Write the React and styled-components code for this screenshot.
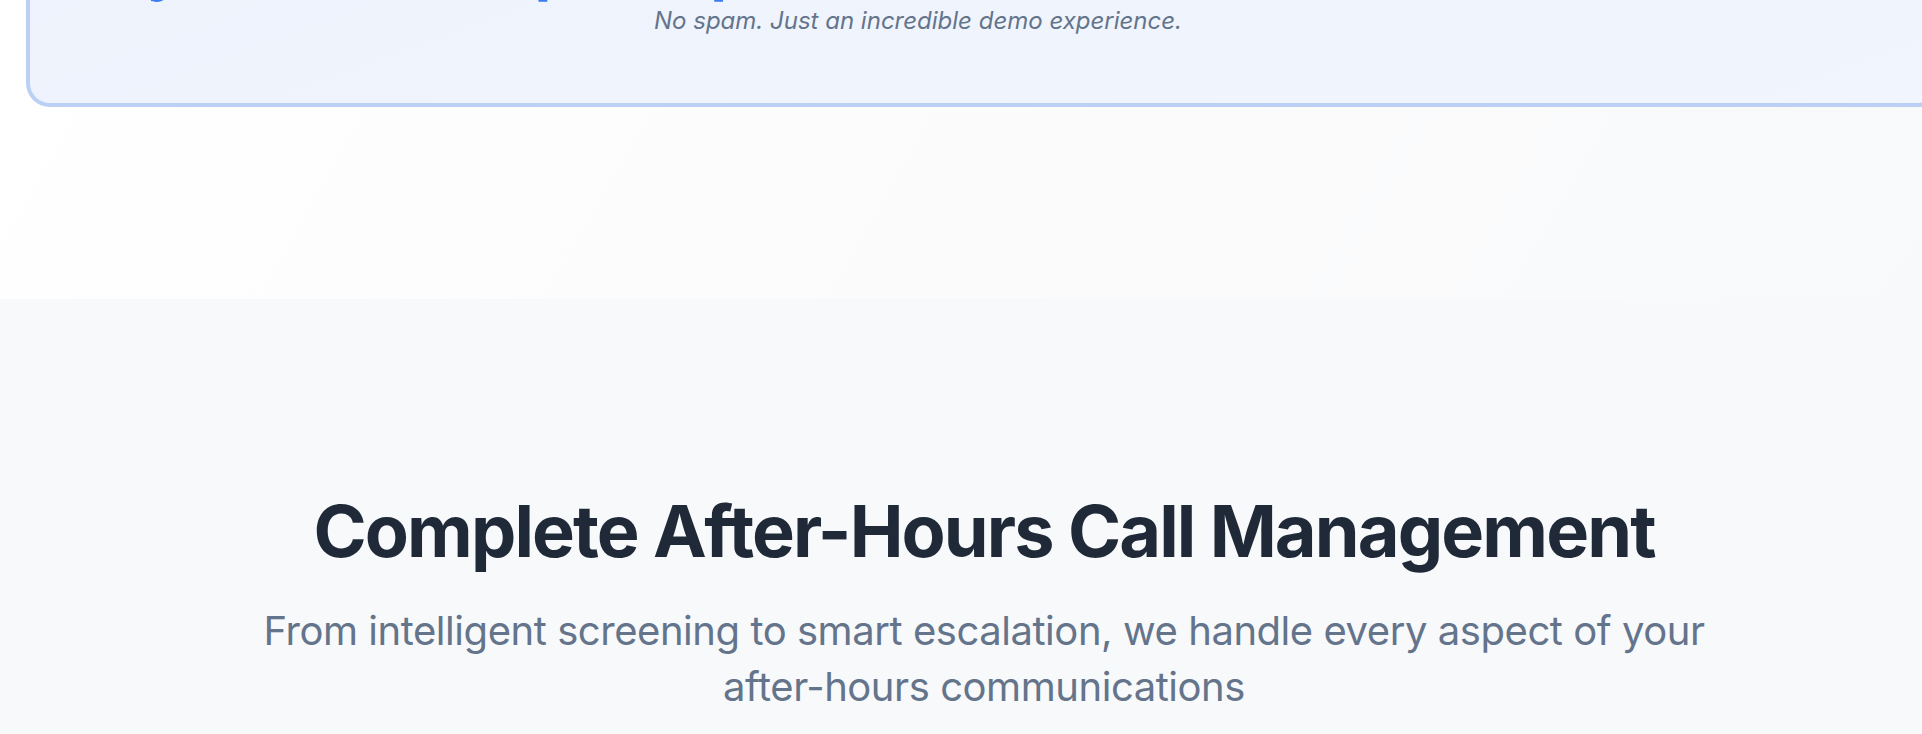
import styled, { createGlobalStyle } from 'styled-components';

const GlobalStyle = createGlobalStyle`
  html, body {
    margin: 0;
    padding: 0;
    overflow: hidden;
    background: #ffffff;
  }
  body {
    font-family: Inter, "Noto Sans", "Liberation Sans", sans-serif;
    -webkit-font-smoothing: antialiased;
  }
`;

const Page = styled.div`
  width: 1968px;
`;

const DemoSection = styled.section`
  padding: 0 0 192px;
  background: linear-gradient(120deg, #ffffff 0%, #fbfbfc 60%, #f8f9fa 100%);
`;

const DemoCard = styled.div`
  margin: -69px 26px 0;
  padding: 0 0 66px;
  border: 4px solid #bcd0f6;
  border-top: none;
  border-radius: 0 0 24px 24px;
  background: linear-gradient(160deg, #edf2fc 0%, #f0f4fd 55%, #f1f5fe 100%);
`;

const CardInner = styled.div`
  width: 1776px;
`;

const CallLine = styled.h2`
  margin: 0;
  padding-left: 40px;
  font-size: 60px;
  line-height: 72px;
  font-weight: 700;
  color: #3b7cf0;
  white-space: nowrap;
`;

const Note = styled.p`
  margin: 2px 0 0;
  font-size: 24px;
  line-height: 32px;
  font-style: italic;
  color: #64748b;
  text-align: center;
`;

const FeatureSection = styled.section`
  padding: 192px 0 120px;
  background: #f8f9fb;
  text-align: center;
`;

const Title = styled.h2`
  margin: 0 0 32px;
  font-size: 72px;
  line-height: 80px;
  font-weight: 700;
  letter-spacing: -0.026em;
  color: #1f2937;
`;

const Lead = styled.p`
  margin: 0 auto;
  max-width: 1536px;
  font-size: 40px;
  line-height: 56px;
  letter-spacing: -0.45px;
  color: #64748b;
`;

export default function App() {
  return (
    <Page>
      <GlobalStyle />
      <DemoSection>
        <DemoCard>
          <CardInner>
            <CallLine>Day (24/7) Just pick up</CallLine>
            <Note>No spam. Just an incredible demo experience.</Note>
          </CardInner>
        </DemoCard>
      </DemoSection>
      <FeatureSection>
        <Title>Complete After-Hours Call Management</Title>
        <Lead>
          From intelligent screening to smart escalation, we handle every aspect of your
          after-hours communications
        </Lead>
      </FeatureSection>
    </Page>
  );
}
